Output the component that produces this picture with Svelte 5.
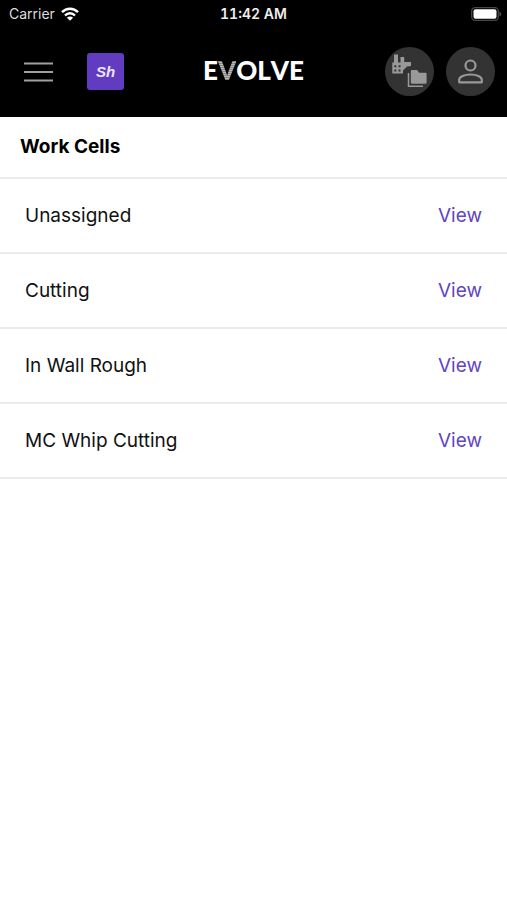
<script lang="ts">
  interface WorkCell {
    id: string;
    name: string;
  }

  const cells: WorkCell[] = [
    { id: 'unassigned', name: 'Unassigned' },
    { id: 'cutting', name: 'Cutting' },
    { id: 'in-wall-rough', name: 'In Wall Rough' },
    { id: 'mc-whip-cutting', name: 'MC Whip Cutting' },
  ];
</script>

<div class="top">
  <div class="status">
    <div class="carrier">
      <span>Carrier</span>
      <svg width="18" height="14" viewBox="0 0 18 14" aria-hidden="true">
        <g fill="none" stroke="#fff" stroke-width="2.5">
          <path d="M1 5.2C5.5 .6 12.5 .6 17 5.2" />
          <path d="M4 8.5C6.8 5.6 11.2 5.6 14 8.5" />
        </g>
        <path d="M9 13.8 5.9 10.7C7.6 9 10.4 9 12.1 10.7Z" fill="#fff" />
      </svg>
    </div>
    <time>11:42 AM</time>
    <svg class="battery" width="31" height="14" viewBox="0 0 31 14" role="img" aria-label="Battery full">
      <rect x="0.7" y="0.7" width="26.6" height="12.6" rx="3.5" fill="none" stroke="#484848" stroke-width="1.3" />
      <rect x="2.5" y="2.3" width="23" height="9.4" rx="2" fill="#fff" />
      <path d="M28.5 4.7C30.8 5.5 30.8 8.5 28.5 9.3Z" fill="#555" />
    </svg>
  </div>

  <header class="bar">
    <div class="left">
      <button type="button" class="menu" aria-label="Menu">
        <svg width="29" height="20" viewBox="0 0 29 20" aria-hidden="true">
          <path d="M0 1.5h29M0 10h29M0 18.5h29" stroke="#a0a0a0" stroke-width="2.2" />
        </svg>
      </button>
      <button type="button" class="shop">Sh</button>
    </div>

    <div class="logo">E<span class="stripe">V</span>OLVE</div>

    <div class="right">
      <button type="button" class="round" aria-label="Projects">
        <svg width="49" height="49" viewBox="0 0 49 49" aria-hidden="true">
          <path
            d="M9 7.5h4v8h2.5V10h3.7v5H26v4l-4 .5-4 4V26.5H7.3V15.5H9Z"
            fill="#999"
          />
          <path
            d="M9.3 18.3h2v2h-2zM13.5 18.3h2v2h-2zM9.3 22.5h2v2h-2zM13.5 22.5h2v2h-2z"
            fill="#333"
          />
          <path
            d="M25.8 24.3q0-1.3 1.3-1.3h5l2 2.7h6.2q1.3 0 1.3 1.3v8.5q0 1.2-1.3 1.2H27.1q-1.3 0-1.3-1.2Z"
            fill="#999"
          />
          <path d="M23.5 26v13.2H38" fill="none" stroke="#999" stroke-width="1.5" />
        </svg>
      </button>
      <button type="button" class="round" aria-label="Account">
        <svg width="49" height="49" viewBox="0 0 49 49" aria-hidden="true">
          <g fill="none" stroke="#999" stroke-width="2.2">
            <circle cx="24.5" cy="18.5" r="5" />
            <path
              d="M13.2 35.3v-2.5c0-3.3 5.5-5.3 11.3-5.3s11.3 2 11.3 5.3v2.5Z"
              stroke-linejoin="round"
            />
          </g>
        </svg>
      </button>
    </div>
  </header>
</div>

<main>
  <h1>Work Cells</h1>
  <ul>
    {#each cells as cell (cell.id)}
      <li>
        <span>{cell.name}</span>
        <a href="#{cell.id}" aria-label="View {cell.name}">View</a>
      </li>
    {/each}
  </ul>
</main>

<style>
  :global(body) {
    margin: 0;
    background: #fff;
    color: #111;
    font-family: Inter, 'Liberation Sans', sans-serif;
  }

  button {
    padding: 0;
    border: 0;
    background: none;
    font-family: inherit;
    cursor: pointer;
  }
  svg {
    display: block;
  }

  .top {
    background: #000;
    color: #fff;
  }

  .status {
    display: grid;
    grid-template-columns: 1fr auto 1fr;
    align-items: center;
    height: 28px;
    padding: 0 5px;
    font-size: 14px;
    line-height: 28px;
  }
  .carrier {
    display: flex;
    align-items: center;
    gap: 6px;
    padding-left: 4px;
    color: #ddd;
  }
  time {
    font-weight: 600;
    font-variant-numeric: tabular-nums;
    color: #eee;
  }
  .battery {
    justify-self: end;
  }

  .bar {
    display: grid;
    grid-template-columns: 1fr auto 1fr;
    align-items: center;
    padding: 19px 12px 21px;
  }
  .left {
    display: flex;
    align-items: center;
    gap: 34px;
    padding-left: 12px;
  }
  .shop {
    width: 37px;
    height: 37px;
    border-radius: 3px;
    background: #613cc0;
    color: #eee6ff;
    font-family: 'Liberation Sans', sans-serif;
    font-size: 15px;
    font-style: italic;
    font-weight: 700;
  }

  .logo {
    padding-bottom: 4px;
    font-family: Lato, sans-serif;
    font-size: 26px;
    line-height: 32px;
    font-weight: 900;
    font-kerning: none;
  }
  .stripe {
    background: repeating-linear-gradient(#b8b8b8 0 1px, #8a8a8a 1px 2px);
    background-clip: text;
    color: transparent;
  }

  .right {
    display: flex;
    justify-content: flex-end;
    gap: 12px;
  }
  .round {
    border-radius: 50%;
    background: #333;
  }

  h1 {
    margin: 0;
    padding: 18px;
    padding-left: 20px;
    border-bottom: 2px solid #ebebeb;
    color: #000;
    font-size: 19px;
    line-height: 24px;
    font-weight: 700;
  }
  ul {
    list-style: none;
    margin: 0;
    padding: 0;
  }
  li {
    display: flex;
    align-items: center;
    justify-content: space-between;
    padding: 25px 25px 24px;
    border-bottom: 2px solid #ebebeb;
    font-size: 19px;
    line-height: 24px;
  }
  a {
    color: #5f45c2;
    text-decoration: none;
  }
</style>
